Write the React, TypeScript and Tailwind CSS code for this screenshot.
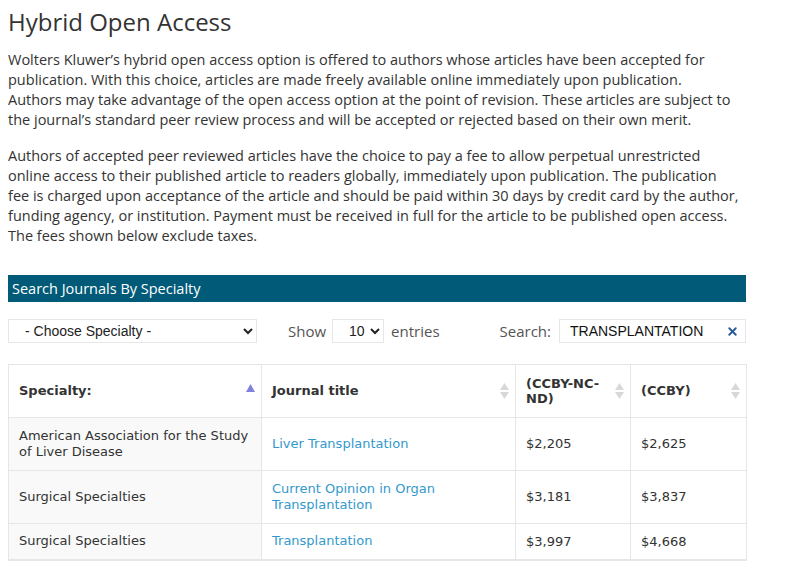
import { X } from "lucide-react";

const rows = [
  { specialty: "American Association for the Study of Liver Disease", title: "Liver Transplantation", nc: "$2,205", cc: "$2,625" },
  { specialty: "Surgical Specialties", title: "Current Opinion in Organ Transplantation", nc: "$3,181", cc: "$3,837" },
  { specialty: "Surgical Specialties", title: "Transplantation", nc: "$3,997", cc: "$4,668" },
];

function SortIcon({ active }: { active?: boolean }) {
  if (active) {
    return (
      <svg width="9" height="8" viewBox="0 0 9 8" className="absolute right-[6px] top-[19px]">
        <path d="M4.5 0 L9 8 H0 Z" fill="#8080dd" />
      </svg>
    );
  }
  return (
    <svg width="9" height="16" viewBox="0 0 9 16" className="absolute right-[6px] top-1/2 -translate-y-1/2">
      <path d="M4.5 0 L9 7 H0 Z" fill="#d8d8d8" />
      <path d="M0 9 H9 L4.5 16 Z" fill="#d8d8d8" />
    </svg>
  );
}

export default function App() {
  return (
    <div className="w-[803px] bg-white px-2 pt-[6px] text-[#333] [font-family:'Open_Sans',sans-serif]">
      <h1 className="text-[24px] leading-[32px] text-[#333]">Hybrid Open Access</h1>
      <p className="mt-[12px] w-[740px] text-[14.5px] leading-[20px]">
        Wolters Kluwer’s hybrid open access option is offered to authors whose articles have been accepted for
        <br />
        publication. With this choice, articles are made freely available online immediately upon publication.
        <br />
        Authors may take advantage of the open access option at the point of revision. These articles are subject to
        <br />
        the journal’s standard peer review process and will be accepted or rejected based on their own merit.
      </p>
      <p className="mt-[16px] w-[740px] text-[14.5px] leading-[20px]">
        Authors of accepted peer reviewed articles have the choice to pay a fee to allow perpetual unrestricted
        <br />
        online access to their published article to readers globally, immediately upon publication. The publication
        <br />
        fee is charged upon acceptance of the article and should be paid within 30 days by credit card by the author,
        <br />
        funding agency, or institution. Payment must be received in full for the article to be published open access.
        <br />
        The fees shown below exclude taxes.
      </p>

      <div className="mt-[29px] w-[738px]">
        <div className="flex h-[27px] items-center bg-[#005a78] px-1 text-[14.5px] text-white">
          Search Journals By Specialty
        </div>

        <div className="mt-[17px] flex h-[24px] items-center">
          <select className="h-[24px] w-[249px] border border-[#e6e6e6] bg-white pl-3 text-[14px] text-[#222] [font-family:'Liberation_Sans',sans-serif]">
            <option>- Choose Specialty -</option>
          </select>
          <span className="ml-[31px] text-[15px] text-[#555]">Show</span>
          <select className="ml-[6px] h-[24px] w-[52px] border border-[#e6e6e6] bg-white pl-3 text-[14px] text-[#222] [font-family:'Liberation_Sans',sans-serif]">
            <option>10</option>
          </select>
          <span className="ml-[7px] text-[15px] text-[#555]">entries</span>
          <span className="ml-auto text-[15px] text-[#555]">Search:</span>
          <div className="ml-[8px] flex h-[24px] w-[187px] items-center border border-[#e6e6e6] pl-[10px] pr-[6px]">
            <span className="flex-1 text-[14px] text-[#111] [font-family:'Liberation_Sans',sans-serif]">TRANSPLANTATION</span>
            <X size={13} strokeWidth={3.5} className="text-[#2a5b9a]" />
          </div>
        </div>

        <table className="mt-[21px] w-[738px] table-fixed border-collapse border-b-2 border-[#e6e6e6] text-[13px] [font-family:'DejaVu_Sans',Verdana,sans-serif]">
          <colgroup>
            <col className="w-[253px]" />
            <col className="w-[254px]" />
            <col className="w-[115px]" />
            <col className="w-[116px]" />
          </colgroup>
          <thead>
            <tr className="h-[53px]">
              <th className="relative border border-[#e6e6e6] pl-[10px] pr-6 text-left font-bold text-[#333]">
                Specialty:
                <SortIcon active />
              </th>
              <th className="relative border border-[#e6e6e6] pl-[10px] pr-6 text-left font-bold text-[#333]">
                Journal title
                <SortIcon />
              </th>
              <th className="relative border border-[#e6e6e6] pl-[10px] pr-6 text-left font-bold leading-[15px] text-[#333]">
                (CCBY-NC-ND)
                <SortIcon />
              </th>
              <th className="relative border border-[#e6e6e6] pl-[10px] pr-6 text-left font-bold text-[#333]">
                (CCBY)
                <SortIcon />
              </th>
            </tr>
          </thead>
          <tbody>
            {rows.map((r, i) => (
              <tr key={i} className={i === 2 ? "h-[36px]" : "h-[53px]"}>
                <td className="border border-[#e6e6e6] bg-[#f9f9f9] px-[10px] leading-[16px] text-[#333]">{r.specialty}</td>
                <td className="border border-[#e6e6e6] px-[10px] leading-[16px] text-[#3399cc]">{r.title}</td>
                <td className="border border-[#e6e6e6] px-[10px] text-[#333]">{r.nc}</td>
                <td className="border border-[#e6e6e6] px-[10px] text-[#333]">{r.cc}</td>
              </tr>
            ))}
          </tbody>
        </table>
      </div>
    </div>
  );
}
